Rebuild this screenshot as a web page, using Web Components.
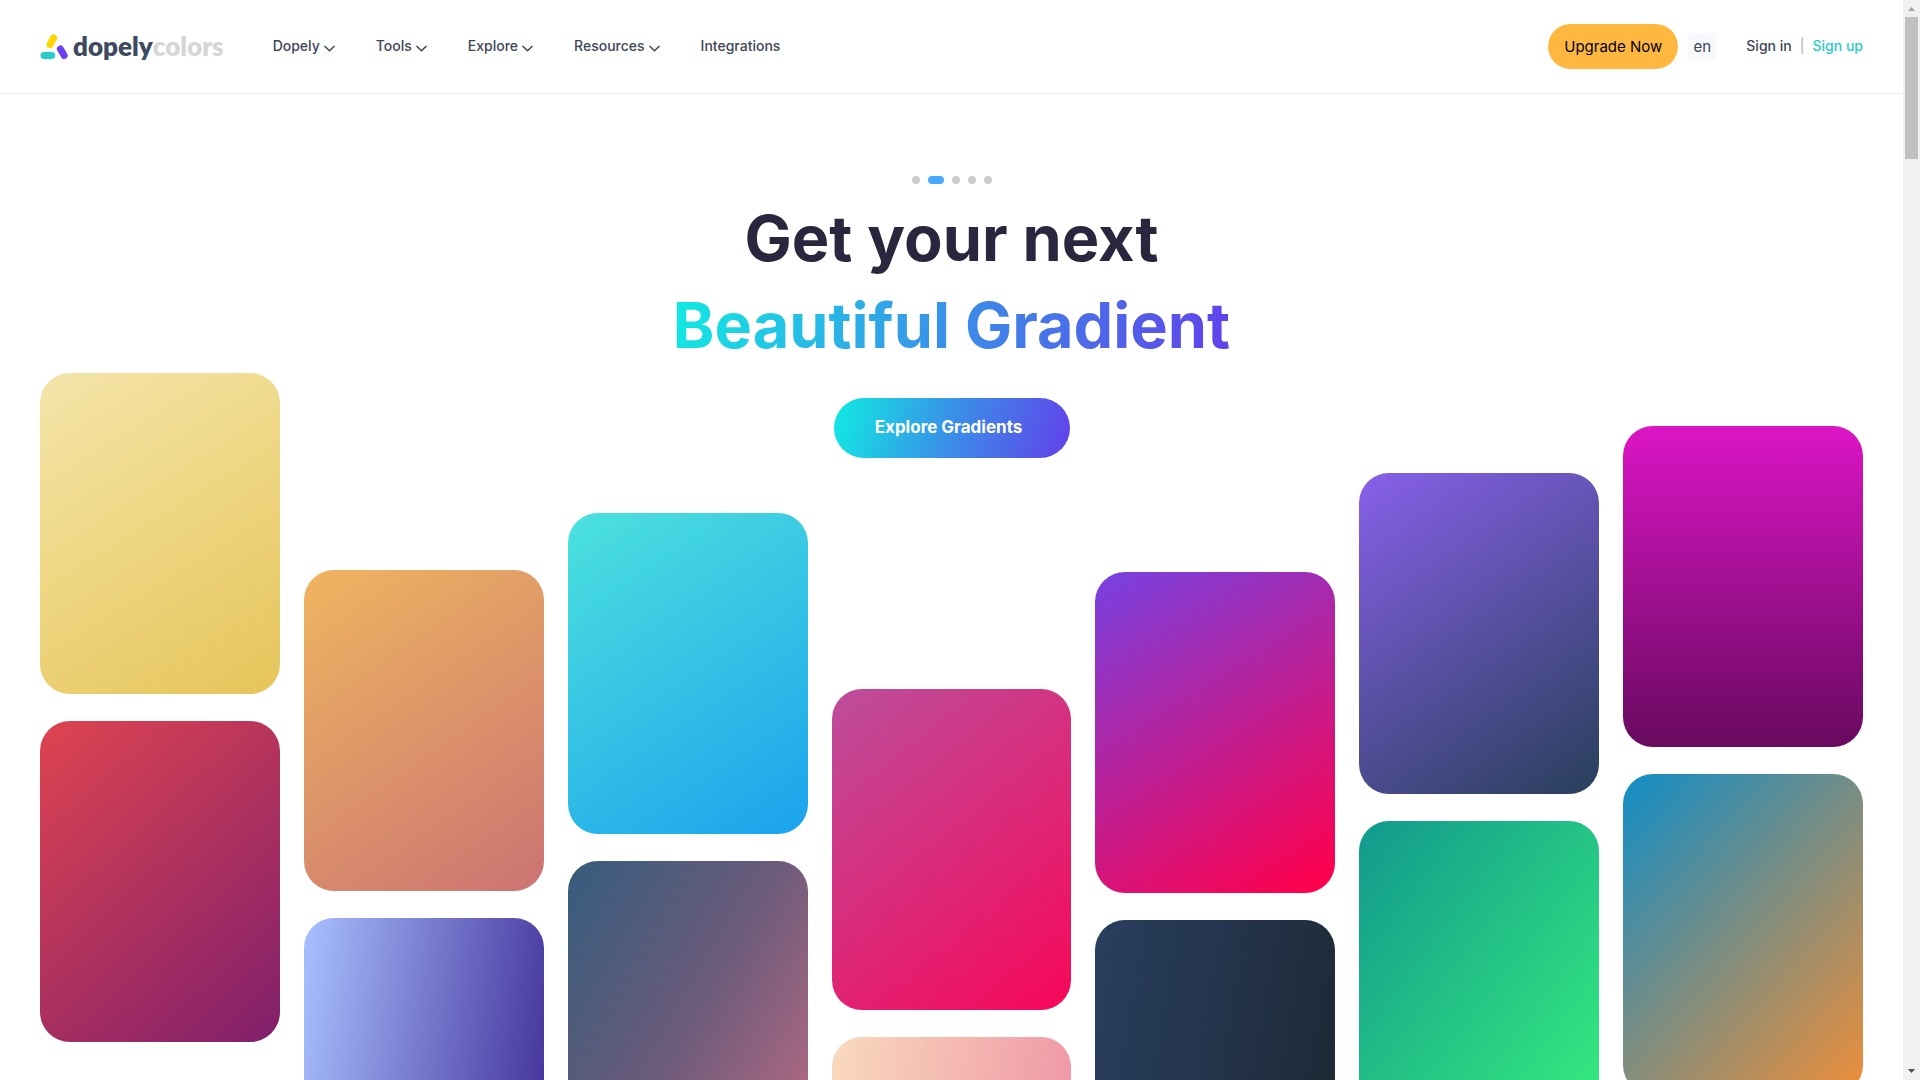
<!DOCTYPE html>
<html lang="en">
<head>
<meta charset="utf-8">
<title>Dopely Colors</title>
<style>
html, body { margin: 0; height: 100%; }
body { font-family: Inter, "Open Sans", sans-serif; color: #3d4657; background: #fff; overflow: hidden; }
</style>
</head>
<body>
<app-shell>
  <site-header slot="header">
    <nav-item menu>Dopely</nav-item>
    <nav-item menu>Tools</nav-item>
    <nav-item menu>Explore</nav-item>
    <nav-item menu>Resources</nav-item>
    <nav-item>Integrations</nav-item>
  </site-header>
  <hero-banner>
    <span slot="title">Get your next</span>
    <span slot="accent">Beautiful Gradient</span>
    <span slot="action">Explore Gradients</span>
  </hero-banner>
  <gradient-gallery>
    <gallery-column drop="0">
      <gradient-card fill="148deg, #f5e5ab, #eed580 50%, #e5c459"></gradient-card>
      <gradient-card fill="137deg, #df4450, #801f6c"></gradient-card>
    </gallery-column>
    <gallery-column drop="197">
      <gradient-card fill="145deg, #efb560, #cb7373"></gradient-card>
      <gradient-card fill="98deg, #a8c0ff, #3f2b96"></gradient-card>
    </gallery-column>
    <gallery-column drop="140">
      <gradient-card fill="146deg, #4ce2de, #1ba2ed"></gradient-card>
      <gradient-card fill="120deg, #355c7d, #6c5b7b, #c06c84"></gradient-card>
    </gallery-column>
    <gallery-column drop="316">
      <gradient-card fill="141deg, #bc4e9c, #f80759"></gradient-card>
      <gradient-card fill="98deg, #f9dabd, #ee8fa3"></gradient-card>
    </gallery-column>
    <gallery-column drop="199">
      <gradient-card fill="148deg, #7741e3, #ff004c 97%"></gradient-card>
      <gradient-card fill="100deg, #283f5f, #23334a 50%, #1d2731"></gradient-card>
    </gallery-column>
    <gallery-column drop="100">
      <gradient-card fill="145deg, #8860ea, #283f5a"></gradient-card>
      <gradient-card fill="127deg, #11998e, #38ef7d"></gradient-card>
    </gallery-column>
    <gallery-column drop="53">
      <gradient-card fill="180deg, #db15c5, #680a5f"></gradient-card>
      <gradient-card fill="132deg, #108dc7, #ef8e38"></gradient-card>
    </gallery-column>
  </gradient-gallery>
  <scroll-rail slot="rail"></scroll-rail>
</app-shell>

<script>
function element(name, html, setup) {
  customElements.define(name, class extends HTMLElement {
    constructor() {
      super();
      this.attachShadow({ mode: "open" }).innerHTML = html;
    }
    connectedCallback() { if (setup) setup(this, this.shadowRoot); }
  });
}

element("app-shell", `
<style>
:host { display: flex; height: 100vh; overflow: hidden; }
.page { flex: 1; min-width: 0; display: flex; flex-direction: column; overflow: hidden; }
main { display: grid; flex: none; }
/* hero and gallery share one cell, so the columns rise beside the headline */
main ::slotted(*) { grid-area: 1 / 1; }
</style>
<div class="page"><slot name="header"></slot><main><slot></slot></main></div>
<slot name="rail"></slot>`);

element("brand-logo", `
<style>
:host { display: block; }
a { display: flex; align-items: center; gap: 5px; text-decoration: none; color: #3d4a5f; font: 800 26px/28px Lato, sans-serif; }
svg { display: block; }
.word { display: flex; padding-bottom: 2px; }
.light { color: #d6d6d6; }
</style>
<a href="#">
  <svg width="28" height="26" viewBox="0 0 28 26" fill="none" stroke-linecap="round" stroke-width="7">
    <path d="M13.600 4 L10 10.700" stroke="#ffd500"/>
    <path d="M4 21.600 H11.600" stroke="#27cdc8"/>
    <path d="M20.400 15 L24.200 21.500" stroke="#6b43ee"/>
  </svg>
  <span class="word"><span>dopely</span><span class="light">colors</span></span>
</a>`);

element("nav-item", `
<style>
:host { display: block; }
a { display: flex; gap: 4px; align-items: center; color: inherit; text-decoration: none; font-weight: 500; font-size: 14px; line-height: 20px; }
svg { display: none; margin-top: 5px; }
:host([menu]) svg { display: block; }
</style>
<a href="#"><slot></slot><svg width="11" height="7" viewBox="0 0 11 7" fill="none" stroke="#3d4657" stroke-width="1.500"><path d="M0.500 1 L5.500 5.800 L10.500 1"/></svg></a>`);

element("site-header", `
<style>
:host { display: flex; flex: none; align-items: center; box-sizing: border-box; height: 94px; padding: 0 40px; border-bottom: 1px solid #ededed; background: #fff; }
nav { display: flex; gap: 41px; margin-left: 49px; padding-bottom: 2px; flex: 1; }
button { border: 0; font-family: inherit; padding: 0; }
.upgrade { height: 45px; padding: 0 16px; border-radius: 23px; background: #ffb83f; color: #000; font-size: 15px; }
.lang { width: 28px; height: 28px; margin-left: 10px; border-radius: 4px; background: #f7f9fc; color: #3d4657; font-size: 15px; }
.account { display: flex; gap: 8px; margin-left: 30px; padding-bottom: 2px; font-size: 14px; line-height: 20px; font-weight: 500; }
.account a { color: inherit; text-decoration: none; }
.account .up { color: #2accc8; }
.bar { color: #c4b8b8; }
</style>
<brand-logo></brand-logo>
<nav><slot></slot></nav>
<button class="upgrade">Upgrade Now</button>
<button class="lang">en</button>
<div class="account"><a href="#">Sign in</a><span class="bar">|</span><a class="up" href="#">Sign up</a></div>`);

element("slide-dots", `
<style>
:host { display: flex; gap: 8px; }
button { width: 8px; height: 8px; padding: 0; border: 0; border-radius: 4px; background: #ccc; }
.on { width: 16px; background: #48a8ff; }
</style>
<button aria-label="Slide 1"></button><button class="on" aria-label="Slide 2"></button><button aria-label="Slide 3"></button><button aria-label="Slide 4"></button><button aria-label="Slide 5"></button>`);

element("hero-banner", `
<style>
:host { --sweep: linear-gradient(105deg, #10ebe2, #3a8fe8 50%, #6140ea); display: flex; flex-direction: column; align-items: center; align-self: start; justify-self: center; padding-top: 82px; z-index: 1; }
h1 { display: flex; flex-direction: column; align-items: center; margin: 11px 0 29px; font-size: 63px; line-height: 87px; font-weight: 700; color: #2b263d; }
.accent { background: var(--sweep); background-clip: text; -webkit-background-clip: text; color: transparent; }
button { height: 60px; width: 236px; padding: 0 6px 2px 0; border: 0; border-radius: 30px; background: var(--sweep); color: #fff; font-family: inherit; font-size: 17px; font-weight: 700; }
</style>
<slide-dots></slide-dots>
<h1><slot name="title"></slot><span class="accent"><slot name="accent"></slot></span></h1>
<button><slot name="action"></slot></button>`);

element("gradient-gallery", `
<style>
:host { display: grid; grid-template-columns: repeat(7, 1fr); gap: 24px; align-items: start; padding: 279px 40px 0; }
</style><slot></slot>`);

element("gallery-column", `
<style>
:host { display: flex; flex-direction: column; gap: 27px; }
</style><slot></slot>`, host => { host.style.paddingTop = host.getAttribute("drop") + "px"; });

element("gradient-card", `
<style>
:host { display: block; height: 321px; border-radius: 30px; }
</style>`, host => { host.style.background = "linear-gradient(" + host.getAttribute("fill") + ")"; });

element("scroll-rail", `
<style>
:host { display: flex; flex: none; flex-direction: column; width: 17px; background: #f1f1f1; }
svg { display: block; }
.track { flex: 1; }
.thumb { height: 13.6%; margin: 0 2px; background: #c1c1c1; }
</style>
<svg width="17" height="17"><path d="M5 11 L8.500 7 L12 11 Z" fill="#a3a3a3"/></svg>
<div class="track"><div class="thumb"></div></div>
<svg width="17" height="17"><path d="M5 6 L8.500 10 L12 6 Z" fill="#505050"/></svg>`);
</script>
</body>
</html>
